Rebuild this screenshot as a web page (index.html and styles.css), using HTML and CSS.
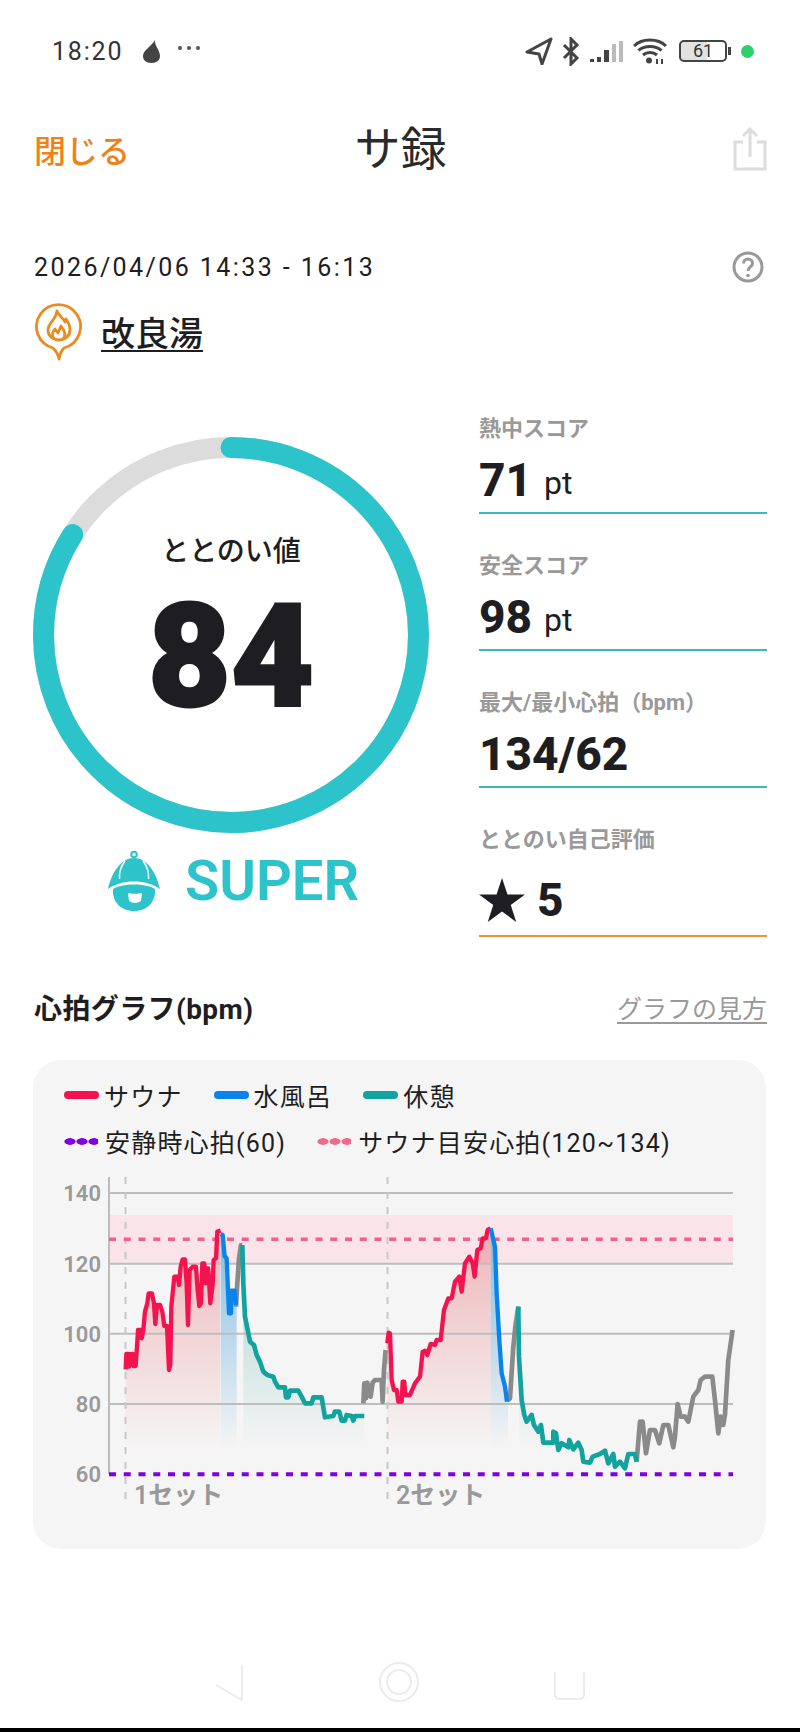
FILE: index.html
```html
<!DOCTYPE html>
<html lang="ja">
<head>
  <meta charset="UTF-8">
  <meta name="viewport" content="width=device-width, initial-scale=1.0">
  <title>サ録</title>
  <link rel="stylesheet" href="styles.css">
</head>
<body>
  <div id="app">
    <div class="status">
      <div class="status-left">
        <span class="time">18:20</span>
        <svg class="ic-drop" viewBox="0 0 19 23"><path d="M13 0C12 5 18 10 18 16C18 20 15 23 9.500 23C4 23 1 20 1 16C1 10 9 7 13 0Z"/></svg>
        <svg class="ic-dots" viewBox="0 0 24 6"><circle cx="3" cy="3" r="2"/><circle cx="12" cy="3" r="2"/><circle cx="21" cy="3" r="2"/></svg>
      </div>
      <div class="status-right">
        <svg class="ic-nav" viewBox="0 0 28 28"><path d="M26 2L2 15L14 17L17 27Z"/></svg>
        <svg class="ic-bt" viewBox="0 0 18 29"><path d="M2 8L15 21L9 27V2L15 8L2 21"/></svg>
        <svg class="ic-signal" viewBox="0 0 34 21">
          <rect x="0" y="18" width="4" height="3" fill="#444"/>
          <rect x="7" y="16" width="4" height="5" fill="#444"/>
          <rect x="14" y="9" width="5" height="12" fill="#444"/>
          <rect x="22" y="3" width="4" height="18" fill="#bbb"/>
          <rect x="29" y="0" width="4" height="21" fill="#bbb"/>
        </svg>
        <svg class="ic-wifi" viewBox="0 0 34 26">
          <path d="M1 8C9 0 25 0 33 8"/>
          <path d="M5.500 12.500C11 7 23 7 28.500 12.500"/>
          <path d="M10 17C14 13.500 20 13.500 24 17"/>
          <circle cx="16" cy="22.500" r="3"/>
          <path class="thin" d="M24 26V21M29 21V26"/>
        </svg>
        <div class="battery"><span>61</span></div>
        <div class="battery-nub"></div>
        <div class="dot-green"></div>
      </div>
    </div>

    <div class="header">
      <a class="close">閉じる</a>
      <h1 class="title">サ録</h1>
      <svg class="ic-share" viewBox="0 0 34 44">
        <path d="M10 15H2V42H32V15H24"/>
        <path d="M17 30V3M10 9L17 2L24 9"/>
      </svg>
    </div>

    <div class="meta">
      <span class="date">2026/04/06 14:33 - 16:13</span>
      <svg class="ic-help" viewBox="0 0 32 32">
        <circle cx="16" cy="16" r="14"/>
        <path d="M11.500 12.500C11.500 6.500 20.500 6.500 20.500 12.500C20.500 16 16 16 16 20"/>
        <circle class="fill" cx="16" cy="24.500" r="1.800"/>
      </svg>
    </div>

    <div class="place">
      <svg class="ic-pin" viewBox="0 0 48 58">
        <path d="M18 45A22 22 0 1 1 29 45C27 47 25 50 24 56C23 50 20 47 18 45Z"/>
        <path d="M22 8C24 13 28 15 30 19L31 16C34 20 35 24 35 27C35 33 30 37 24 37C18 37 13 33 13 27C13 20 21 17 22 8Z"/>
        <path d="M19 36C16 32 18 28 20 26L23 30L26 23C30 28 31 33 28 36"/>
      </svg>
      <a class="place-name">改良湯</a>
    </div>

    <div class="score">
      <div class="score-left">
        <div class="ring-wrap">
          <svg class="ring" viewBox="0 0 396 396">
            <circle class="ring-bg" cx="198" cy="198" r="187.500"/>
            <circle class="ring-val" cx="198" cy="198" r="187.500" pathLength="100" stroke-dasharray="84 100" transform="rotate(-90 198 198)"/>
          </svg>
          <div class="ring-text">
            <div class="ring-label">ととのい値</div>
            <div class="ring-num">84</div>
          </div>
        </div>
        <div class="rank">
          <svg class="ic-rank" viewBox="0 0 54 60">
            <circle class="knob" cx="27" cy="3.500" r="2.800"/>
            <path d="M1 38C5 20 15 7 27 7C39 7 49 20 53 38C40 28 14 28 1 38Z"/>
            <path d="M6 38C15 32 39 32 48 38C49 51 40 60 27 60C14 60 5 51 6 38Z"/>
            <path class="mouth" d="M21 42C25 43 31 43 35 42L34 50Q28 54 22 50Z"/>
            <path class="crease" d="M18 10C14 15 12 21 12.500 28M36 10C40 15 42 21 41.500 28"/>
          </svg>
          <span class="rank-name">SUPER</span>
        </div>
      </div>

      <div class="metrics">
        <div class="metric">
          <div class="metric-label">熱中スコア</div>
          <div class="metric-value">71<span class="unit">pt</span></div>
        </div>
        <div class="metric">
          <div class="metric-label">安全スコア</div>
          <div class="metric-value">98<span class="unit">pt</span></div>
        </div>
        <div class="metric">
          <div class="metric-label">最大/最小心拍（bpm）</div>
          <div class="metric-value">134/62</div>
        </div>
        <div class="metric metric-last">
          <div class="metric-label">ととのい自己評価</div>
          <div class="metric-value"><svg class="ic-star" viewBox="0 0 42 40"><path d="M21 0L26 15H42L29 24.500L34 40L21 30.500L8 40L13 24.500L0 15H16Z"/></svg>5</div>
        </div>
      </div>
    </div>

    <div class="graph-head">
      <span class="graph-title">心拍グラフ(bpm)</span>
      <a class="graph-help">グラフの見方</a>
    </div>

    <div class="card">
      <div class="legend">
        <div class="legend-row">
          <span class="legend-item"><i class="swatch red"></i>サウナ</span>
          <span class="legend-item"><i class="swatch blue"></i>水風呂</span>
          <span class="legend-item"><i class="swatch teal"></i>休憩</span>
        </div>
        <div class="legend-row">
          <span class="legend-item"><i class="dots purple"></i>安静時心拍(60)</span>
          <span class="legend-item"><i class="dots pink"></i>サウナ目安心拍(120~134)</span>
        </div>
      </div>

      <svg class="chart" viewBox="33 1170 733 340">
        <defs>
          <linearGradient id="red1" gradientUnits="userSpaceOnUse" x1="0" y1="495" x2="0" y2="1200"><stop offset="0" stop-color="#e66e73" stop-opacity=".5"/><stop offset="1" stop-color="#e66e73" stop-opacity="0"/></linearGradient>
          <linearGradient id="blue1" gradientUnits="userSpaceOnUse" x1="0" y1="495" x2="0" y2="1200"><stop offset="0" stop-color="#50a5d7" stop-opacity=".75"/><stop offset="1" stop-color="#50a5d7" stop-opacity="0"/></linearGradient>
          <linearGradient id="teal1" gradientUnits="userSpaceOnUse" x1="0" y1="600" x2="0" y2="1200"><stop offset="0" stop-color="#3caaa0" stop-opacity=".4"/><stop offset="1" stop-color="#3caaa0" stop-opacity="0"/></linearGradient>
          <linearGradient id="red2" gradientUnits="userSpaceOnUse" x1="0" y1="165" x2="0" y2="870"><stop offset="0" stop-color="#e66e73" stop-opacity=".5"/><stop offset="1" stop-color="#e66e73" stop-opacity="0"/></linearGradient>
          <linearGradient id="blue2" gradientUnits="userSpaceOnUse" x1="0" y1="165" x2="0" y2="870"><stop offset="0" stop-color="#50a5d7" stop-opacity=".75"/><stop offset="1" stop-color="#50a5d7" stop-opacity="0"/></linearGradient>
          <linearGradient id="teal2" gradientUnits="userSpaceOnUse" x1="0" y1="270" x2="0" y2="870"><stop offset="0" stop-color="#3caaa0" stop-opacity=".4"/><stop offset="1" stop-color="#3caaa0" stop-opacity="0"/></linearGradient>
        </defs>

        <rect class="band" x="109" y="1215" width="624" height="49"/>

        <!-- 1セット -->
        <g transform="translate(30 1050) scale(.3333)">
          <path fill="url(#red1)" d="M287 958L289 912L296 912L298 950L303 912L308 912L310 948L317 948L322 875L324 840L333 840L335 865L340 840L345 785L352 760L356 730L366 730L372 760L376 822L381 765L390 765L397 785L403 828L411 828L417 960L421 945L424 770L433 680L443 680L447 705L452 650L458 628L465 628L470 700L474 825L479 660L488 650L498 650L503 720L508 768L513 760L517 640L523 640L527 700L530 655L535 655L541 760L548 705L551 630L558 625L562 545L570 542V1200H287Z"/>
          <path fill="url(#blue1)" d="M572 552L578 555L584 618L590 625L597 790L603 790L604 722L614 722L620 765V1200H572Z"/>
          <path fill="url(#teal1)" d="M640 700L645 800L655 850L660 875L672 885L680 915L690 935L700 965L712 975L730 980L735 995L745 1012L765 1012L768 1042L775 1042L780 1022L805 1022L815 1040L825 1060L845 1060L850 1042L875 1042L885 1102L910 1098L915 1085L928 1085L935 1112L945 1112L950 1095L965 1098L970 1112L975 1098L1003 1098V1200H640Z"/>
        </g>
        <!-- 2セット -->
        <g transform="translate(370 1160) scale(.3333)">
          <path fill="url(#red2)" d="M52 550L56 518L60 520L65 660L72 690L80 690L85 725L95 725L98 665L103 665L106 705L120 705L135 670L150 650L158 575L165 572L172 585L182 552L195 555L200 540L212 540L222 450L235 415L245 415L255 365L268 350L275 395L285 310L298 290L308 310L314 350L322 270L332 265L338 235L348 235L353 210L362 205V870H52Z"/>
          <path fill="url(#blue2)" d="M362 205L375 260L380 400L388 540L395 640L405 680L414 725V870H362Z"/>
          <path fill="url(#teal2)" d="M447 590L455 720L463 765L470 785L485 765L492 795L505 815L513 795L520 848L550 848L550 815L558 820L565 870H447Z"/>
        </g>

        <path class="grid" d="M109 1193H733M109 1263.700H733M109 1333.700H733M109 1404H733"/>
        <path class="axis" d="M109 1177V1474"/>
        <path class="set-line" d="M125.500 1177V1502M387.500 1177V1502"/>
        <path class="limit-pink" d="M109 1239.300H733"/>
        <path class="limit-purple" d="M109 1474.300H733"/>

        <text class="tick" x="101" y="1201">140</text>
        <text class="tick" x="101" y="1272">120</text>
        <text class="tick" x="101" y="1342">100</text>
        <text class="tick" x="101" y="1412">80</text>
        <text class="tick" x="101" y="1482">60</text>
        <text class="set-name" x="134" y="1504">1セット</text>
        <text class="set-name" x="396" y="1504">2セット</text>

        <g transform="translate(30 1050) scale(.3333)">
          <polyline class="ln ln-gray" points="618,770 622,700 627,625 633,585 637,585"/>
          <polyline class="ln ln-gray" points="1000,1060 1003,1000 1008,1045 1012,998 1022,1040 1028,998 1035,990 1055,990 1058,1055 1062,960 1067,900"/>
          <polyline class="ln ln-red" points="287,958 289,912 296,912 298,950 303,912 308,912 310,948 317,948 322,875 324,840 333,840 335,865 340,840 345,785 352,760 356,730 366,730 372,760 376,822 381,765 390,765 397,785 403,828 411,828 417,960 421,945 424,770 433,680 443,680 447,705 452,650 458,628 465,628 470,700 474,825 479,660 488,650 498,650 503,720 508,768 513,760 517,640 523,640 527,700 530,655 535,655 541,760 548,705 551,630 558,625 562,545 572,542"/>
          <polyline class="ln ln-blue" points="572,552 578,555 584,618 590,625 597,790 603,790 604,722 614,722 618,765"/>
          <polyline class="ln ln-teal" points="637,585 640,700 645,800 655,850 660,875 672,885 680,915 690,935 700,965 712,975 730,980 735,995 745,1012 765,1012 768,1042 775,1042 780,1022 805,1022 815,1040 825,1060 845,1060 850,1042 875,1042 885,1102 910,1098 915,1085 928,1085 935,1112 945,1112 950,1095 965,1098 970,1112 975,1098 1003,1098"/>
        </g>
        <g transform="translate(370 1160) scale(.3333)">
          <polyline class="ln ln-gray" points="411,722 420,715 430,560 436,500 445,440"/>
          <polyline class="ln ln-gray" points="800,905 810,785 818,785 828,880 840,810 855,810 868,850 880,795 895,795 910,862 915,830 923,732 932,770 945,770 955,785 970,710 985,690 992,660 1005,650 1027,650 1035,720 1045,820 1052,770 1060,795 1065,765 1075,600 1088,510"/>
          <polyline class="ln ln-red" points="52,550 56,518 60,520 65,660 72,690 80,690 85,725 95,725 98,665 103,665 106,705 120,705 135,670 150,650 158,575 165,572 172,585 182,552 195,555 200,540 212,540 222,450 235,415 245,415 255,365 268,350 275,395 285,310 298,290 308,310 314,350 322,270 332,265 338,235 348,235 353,210 362,205"/>
          <polyline class="ln ln-blue" points="362,205 375,260 380,400 388,540 395,640 405,680 411,725"/>
          <polyline class="ln ln-teal" points="445,440 447,590 455,720 463,765 470,785 485,765 492,795 505,815 513,795 520,848 550,848 550,815 558,820 565,870 575,850 595,862 598,840 610,868 625,848 635,870 640,905 660,908 668,890 690,882 705,872 715,910 730,882 735,920 750,905 765,925 775,882 795,882 800,905"/>
        </g>
      </svg>
    </div>

    <div class="nav">
      <div class="nav-icons">
        <svg class="ic-back" viewBox="0 0 28 37"><path d="M1 21L27 36V1"/></svg>
        <svg class="ic-home" viewBox="0 0 40 40"><circle cx="20" cy="20" r="19"/><circle cx="20" cy="20" r="12"/></svg>
        <svg class="ic-recent" viewBox="0 0 31 28"><path d="M1 0V22Q1 27 6 27H25Q30 27 30 22V0"/></svg>
      </div>
      <div class="nav-strip"></div>
    </div>
  </div>
</body>
</html>
```

FILE: styles.css
```css
* {
  box-sizing: border-box;
}
body {
  margin: 0;
  background-color: white;
  font-family: Roboto, "Noto Sans CJK JP", sans-serif;
  color: #1e1e22;
}
#app {
  width: 800px;
  height: 1732px;
  display: flex;
  flex-direction: column;
  overflow: hidden;
}

/* status bar */
.status {
  height: 102px;
  display: flex;
  justify-content: space-between;
  align-items: center;
  padding: 0 46px 0 52px;
}
.status-left,
.status-right {
  display: flex;
  align-items: center;
}
.time {
  font-size: 25px;
  letter-spacing: 1.800px;
  color: #333;
  margin-right: 19px;
}
.ic-drop {
  width: 19px;
  height: 23px;
  fill: #444;
  margin-right: 16px;
}
.ic-dots {
  width: 24px;
  height: 6px;
  fill: #555;
  margin-bottom: 6px;
}
.ic-nav {
  width: 28px;
  height: 28px;
  fill: none;
  stroke: #444;
  stroke-width: 3;
  stroke-linejoin: round;
  margin-right: 9px;
}
.ic-bt {
  width: 18px;
  height: 29px;
  fill: none;
  stroke: #444;
  stroke-width: 3;
  margin-right: 10px;
}
.ic-signal {
  width: 34px;
  height: 21px;
  margin-right: 9px;
}
.ic-wifi {
  width: 34px;
  height: 26px;
  fill: none;
  stroke: #444;
  stroke-width: 3;
  margin-right: 12px;
}
.ic-wifi circle {
  fill: #444;
  stroke: none;
}
.ic-wifi .thin {
  stroke-width: 2;
}
.battery {
  width: 48px;
  height: 22px;
  border: 2px solid #444;
  border-radius: 5px;
  background: linear-gradient(to right, #e2e2e2 60%, white 60%);
  display: flex;
  align-items: center;
  justify-content: center;
  font-size: 18px;
  line-height: 18px;
  color: #333;
}
.battery-nub {
  width: 3px;
  height: 8px;
  margin-left: 1px;
  margin-right: 10px;
  background-color: #444;
}
.dot-green {
  width: 13px;
  height: 13px;
  border-radius: 50%;
  background-color: #2fcf6c;
}

/* header */
.header {
  height: 94px;
  display: grid;
  grid-template-columns: 1fr auto 1fr;
  align-items: center;
  padding: 0 33px 0 34px;
}
.close {
  font-size: 32px;
  font-weight: 500;
  color: #ee8214;
}
.title {
  margin: 0;
  font-size: 46px;
  font-weight: 400;
  line-height: 60px;
  color: #2a2a2a;
}
.ic-share {
  justify-self: end;
  width: 34px;
  height: 44px;
  fill: none;
  stroke: #dcdcdc;
  stroke-width: 3;
}

/* date and place */
.meta {
  height: 32px;
  margin-top: 55px;
  padding: 0 36px 0 34px;
  display: flex;
  justify-content: space-between;
  align-items: center;
}
.date {
  font-size: 25px;
  letter-spacing: 2.420px;
}
.ic-help {
  width: 32px;
  height: 32px;
  fill: none;
  stroke: #999;
  stroke-width: 3;
}
.ic-help .fill {
  fill: #999;
  stroke: none;
}
.place {
  margin-top: 20px;
  padding-left: 35px;
  height: 58px;
  display: flex;
  align-items: center;
  gap: 18px;
}
.ic-pin {
  width: 48px;
  height: 58px;
  fill: none;
  stroke: #ec8a1f;
  stroke-width: 2.800;
  stroke-linejoin: round;
}
.place-name {
  font-size: 34px;
  font-weight: 500;
  line-height: 44px;
  margin-top: 4px;
  text-decoration: underline;
  text-underline-offset: 4px;
  text-decoration-thickness: 2px;
}

/* score */
.score {
  margin-top: 53px;
  height: 522px;
  padding-left: 33px;
  display: flex;
}
.score-left {
  width: 396px;
  padding-top: 23px;
}
.ring-wrap {
  display: grid;
  width: 396px;
  height: 396px;
}
.ring,
.ring-text {
  grid-area: 1 / 1;
}
.ring {
  width: 396px;
  height: 396px;
}
.ring-bg,
.ring-val {
  fill: none;
  stroke-width: 21;
}
.ring-bg {
  stroke: #dcdcdc;
}
.ring-val {
  stroke: #2cc3ca;
  stroke-linecap: round;
}
.ring-text {
  display: flex;
  flex-direction: column;
  align-items: center;
  padding-top: 95px;
}
.ring-label {
  font-size: 28px;
  font-weight: 500;
  line-height: 40px;
}
.ring-num {
  font-size: 143px;
  font-weight: 900;
  line-height: 170px;
  -webkit-text-stroke: 3px #1e1e22;
}
.rank {
  margin-top: 18px;
  height: 60px;
  padding-left: 4px;
  display: flex;
  justify-content: center;
  align-items: center;
  gap: 24px;
}
.ic-rank {
  width: 54px;
  height: 60px;
  fill: #2cc3ca;
}
.ic-rank .knob {
  fill: none;
  stroke: #2cc3ca;
  stroke-width: 2;
}
.ic-rank .mouth {
  fill: white;
}
.ic-rank .crease {
  fill: none;
  stroke: white;
  stroke-width: 1.500;
}
.rank-name {
  font-size: 56px;
  font-weight: 600;
  color: #2cc3ca;
}
.metrics {
  width: 288px;
  margin-left: 50px;
  display: flex;
  flex-direction: column;
  gap: 37px;
}
.metric {
  border-bottom: 2px solid #3cb8bd;
}
.metric-label {
  font-size: 22px;
  font-weight: 700;
  line-height: 30px;
  color: #999;
  height: 30px;
}
.metric-value {
  height: 68px;
  padding-top: 3px;
  display: flex;
  align-items: center;
  font-size: 46px;
  font-weight: 800;
}
.unit {
  font-size: 32px;
  font-weight: 400;
  margin-left: 12px;
  margin-top: 6px;
}
.metric-last {
  border-bottom-color: #ef9330;
}
.metric-last .metric-value {
  height: 80px;
  padding-top: 10px;
}
.ic-star {
  width: 46px;
  height: 44px;
  fill: #1e1e22;
  margin-right: 12px;
}

/* graph */
.graph-head {
  margin-top: 56px;
  height: 30px;
  padding: 0 33px 0 34px;
  display: flex;
  justify-content: space-between;
  align-items: center;
}
.graph-title {
  font-size: 28px;
  font-weight: 700;
  letter-spacing: .4px;
}
.graph-help {
  font-size: 25px;
  color: #999;
  text-decoration: underline;
  text-underline-offset: 4px;
}
.card {
  margin: 38px 0 0 33px;
  width: 733px;
  height: 489px;
  border-radius: 28px;
  background-color: #f6f5f5;
  padding-top: 20px;
}
.legend {
  padding-left: 31px;
  display: flex;
  flex-direction: column;
  gap: 16px;
}
.legend-row {
  display: flex;
  height: 30px;
  gap: 31px;
}
.legend-item {
  display: flex;
  align-items: center;
  gap: 5px;
  font-size: 25px;
  letter-spacing: 1.200px;
}
.swatch {
  width: 35px;
  height: 8px;
  border-radius: 4px;
}
.swatch.red { background-color: #f5134f; }
.swatch.blue { background-color: #0a84ea; }
.swatch.teal { background-color: #12a39f; }
.dots {
  width: 34px;
  height: 7px;
  margin-right: 2px;
  background-size: 12px 7px;
  background-repeat: repeat-x;
}
.dots.purple {
  background-image: radial-gradient(closest-side, #8000e6 85%, transparent 100%);
}
.dots.pink {
  background-image: radial-gradient(closest-side, #f0698f 85%, transparent 100%);
}
.chart {
  display: block;
  width: 733px;
  height: 340px;
  margin-top: 14px;
}
.band {
  fill: #fae3e9;
}
.grid {
  fill: none;
  stroke: #bdbdbd;
  stroke-width: 2;
}
.axis {
  stroke: #bdbdbd;
  stroke-width: 2;
}
.set-line {
  stroke: #c8c8c8;
  stroke-width: 2;
  stroke-dasharray: 7 8;
}
.limit-pink {
  stroke: #f0608f;
  stroke-width: 3.500;
  stroke-dasharray: 7 7.750;
}
.limit-purple {
  stroke: #8000e6;
  stroke-width: 4;
  stroke-dasharray: 7 7.750;
}
.tick {
  font-size: 22px;
  font-weight: 600;
  fill: #999;
  text-anchor: end;
}
.set-name {
  font-size: 25px;
  font-weight: 600;
  fill: #999;
}
.ln {
  fill: none;
  stroke-width: 13;
  stroke-linejoin: round;
}
.ln-red { stroke: #f5134f; }
.ln-blue { stroke: #0a84ea; }
.ln-teal { stroke: #12a39f; stroke-width: 14; }
.ln-gray { stroke: #8a8a8a; stroke-width: 14; }

/* nav bar */
.nav {
  margin-top: auto;
}
.nav-icons {
  display: flex;
  justify-content: space-between;
  align-items: center;
  padding: 0 215px 26px;
}
.nav-icons svg {
  fill: none;
  stroke: #ebebeb;
  stroke-width: 2;
}
.ic-back {
  width: 28px;
  height: 37px;
}
.ic-home {
  width: 40px;
  height: 40px;
}
.ic-recent {
  width: 31px;
  height: 28px;
  margin-top: 8px;
}
.nav-strip {
  height: 4px;
  background-color: black;
}
```
